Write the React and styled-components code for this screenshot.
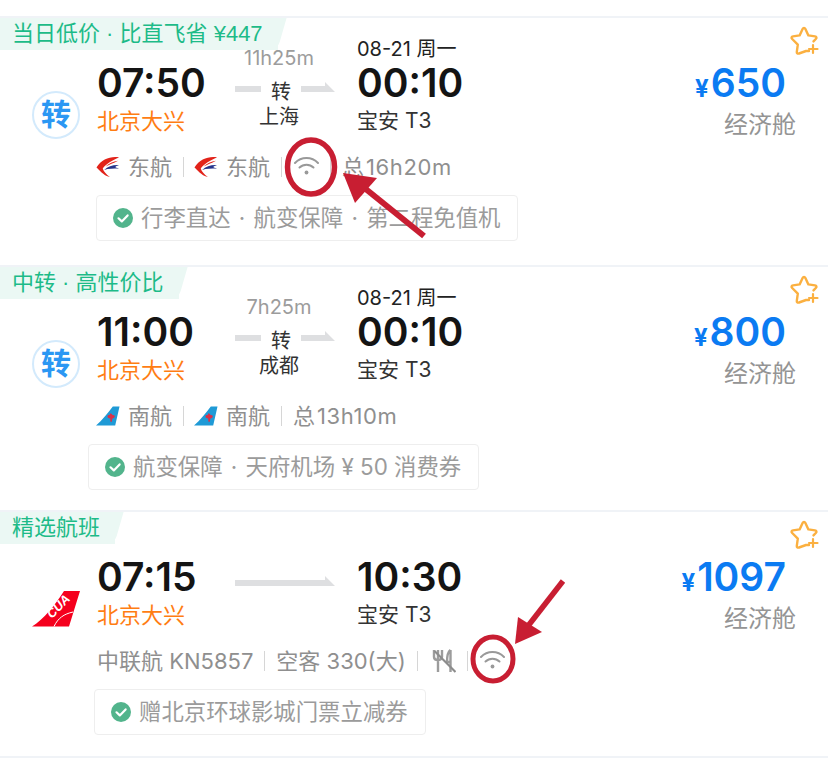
import React from 'react';
import styled, {createGlobalStyle} from 'styled-components';

const GlobalStyle = createGlobalStyle`
  html, body {
    margin: 0;
    padding: 0;
    background: #fff;
    font-family: Inter, "Noto Sans CJK SC", sans-serif;
  }
`
const Page = styled.div`
  position: relative;
  width: 828px;
  height: 762px;
  padding-top: 16px;
  box-sizing: border-box;
  overflow: hidden;
`
const Card = styled.section`
  position: relative;
  height: ${p => p.$height}px;
  box-sizing: border-box;
  border-top: 2px solid #f0f3f7;
  padding-top: 20px;
  &:last-of-type {
    border-bottom: 2px solid #f0f3f7;
  }
`
const Tag = styled.div`
  position: absolute;
  top: 0;
  left: 0;
  z-index: 0;
  height: 32px;
  padding: 0 15px 0 12px;
  background: #ebf8f4;
  color: #1dbb88;
  font-family: "Liberation Sans", "Noto Sans CJK SC", sans-serif;
  font-size: 22px;
  line-height: 31px;
  white-space: pre;
  &::after {
    content: '';
    position: absolute;
    top: 0;
    bottom: 0;
    right: -4px;
    width: 12px;
    background: #ebf8f4;
    transform: skewX(-16deg);
    border-bottom-right-radius: 8px;
    z-index: -1;
  }
`
const Star = styled.svg`
  position: absolute;
  top: 8px;
  right: 9px;
  width: 30px;
  height: 30px;
`
const FlightRow = styled.div`
  display: grid;
  grid-template-columns: 97px 138px 122px 1fr 132px;
  grid-template-rows: 98px;
`
const LogoSlot = styled.div`
  align-self: end;
  height: 47px;
  padding-left: 32px;
  margin-bottom: -2px;
  display: flex;
  align-items: center;
`
const TransferBadge = styled.div`
  width: 48px;
  height: 48px;
  box-sizing: border-box;
  border: 2px solid #d3eafc;
  border-radius: 50%;
  color: #2b97f3;
  font-size: 30px;
  font-weight: 700;
  line-height: 42px;
  text-align: center;
`
const Stop = styled.div`
  display: flex;
  flex-direction: column;
  justify-content: flex-end;
`
const DateText = styled.div`
  height: 22px;
  font-size: 20px;
  line-height: 22px;
  color: #222;
  white-space: pre;
`
const Time = styled.div`
  height: 46px;
  font-size: 39px;
  font-weight: 600;
  line-height: 46px;
  color: #141414;
`
const Place = styled.div`
  height: 30px;
  font-size: ${p => p.$orange ? 22 : 21}px;
  line-height: 30px;
  white-space: pre;
  color: ${p => p.$orange ? '#ff7d13' : '#333'};
`
const Middle = styled.div`
  width: 100px;
  padding-top: 9px;
`
const Duration = styled.div`
  width: 88px;
  height: 22px;
  font-size: 20px;
  line-height: 22px;
  text-align: center;
  color: #9c9c9c;
`
const ArrowRow = styled.div`
  display: flex;
  align-items: center;
  height: 24px;
  margin-top: 9px;
  font-size: 20px;
  color: #333;
`
const Bar = styled.div`
  width: 26px;
  height: 6px;
  margin-top: -2px;
  background: #dedfe1;
`
const ArrowBar = styled.div`
  flex: 1;
  height: 10px;
  margin-top: -6px;
  background: #dedfe1;
  clip-path: polygon(0 4px, calc(100% - 10px) 4px, calc(100% - 10px) 0, 100% 100%, 0 100%);
`
const Via = styled.div`
  width: 40px;
  text-align: center;
`
const ViaCity = styled.div`
  width: 88px;
  margin-top: 3px;
  font-size: 20px;
  line-height: 24px;
  text-align: center;
  color: #333;
`
const PriceCol = styled.div`
  grid-column: 5;
  display: flex;
  flex-direction: column;
  align-items: flex-end;
  padding: 22px 32px 0 0;
`
const Price = styled.div`
  margin-right: 10px;
  height: 46px;
  line-height: 46px;
  color: #0b7bf2;
  white-space: nowrap;
  font-weight: 600;
  font-size: 39px;
  & > span {
    font-size: 24px;
    font-weight: 700;
    margin-right: 2px;
  }
`
const CabinClass = styled.div`
  margin-top: 3px;
  font-size: 24px;
  line-height: 32px;
  color: #949494;
`
const InfoRow = styled.div`
  display: flex;
  align-items: center;
  height: 30px;
  margin: 14px 0 0 97px;
  font-size: 22px;
  color: #8f8f8f;
  white-space: pre;
`
const Sep = styled.i`
  width: 1px;
  height: 20px;
  margin: 4px 11px 0;
  background: #d6d6d6;
`
const CarrierLogo = styled.svg`
  width: 24px;
  height: 22px;
  margin: 4px 8px 0 -1px;
  flex: none;
`
const SmallIcon = styled.svg`
  width: ${p => p.$width}px;
  height: 24px;
  margin-top: 4px;
  flex: none;
`
const Total = styled.span`
  & > b {
    font-weight: 400;
    margin-left: 2px;
    letter-spacing: .6px;
  }
`
const Perks = styled.div`
  display: inline-flex;
  align-items: center;
  height: 46px;
  box-sizing: border-box;
  margin: 15px 0 0 ${p => p.$left}px;
  padding: 0 17px 0 16px;
  border: 1px solid #eeeeee;
  border-radius: 4px;
  font-size: 22.4px;
  line-height: 42px;
  color: #9b9b9b;
  white-space: pre;
`
const CheckIcon = styled.svg`
  width: 20px;
  height: 20px;
  margin-right: 8px;
  flex: none;
`
const Dot = styled.span`
  display: inline-block;
  width: 23px;
  text-align: center;
`
const Overlay = styled.svg`
  position: absolute;
  top: 0;
  left: 0;
  width: 828px;
  height: 762px;
  pointer-events: none;
`

const StarIcon = () => (
  <Star viewBox="0 0 30 30" fill="none" stroke="#fbb040" strokeWidth="2.4" strokeLinecap="round" strokeLinejoin="round">
    <path d="M20 25 H17 L10 27.5 C8.5 28 7.6 27.2 7.8 25.8 L8.8 18.6 L3.2 13 C2 11.8 2.5 10.6 4 10.4 L10.6 9.4 L13.6 3 C14.3 1.6 15.7 1.6 16.4 3 L19.4 9.4 L26 10.4 C27.5 10.6 28 11.8 26.8 13 L24.5 15.4"/>
    <path d="M24 19 V27 M20 23 H28.5" strokeWidth="2.2"/>
  </Star>
)

const EasternLogo = () => (
  <CarrierLogo viewBox="0 0 25 22">
    <path fill="#e2231a" d="M24 1 C15 -.5 6 3 .5 11.5 C3.5 14 7 19.5 14.5 21.5 C10.5 18.5 8 15.5 7 12.5 C10.5 7.5 17 4 24 1 Z"/>
    <path fill="#27348b" d="M24 9 C18 8.5 12.5 10.5 8.5 14 C13 12.5 18 12.5 24 12.5 C20 11.6 18 11 24 9 Z"/>
    <path fill="#e2231a" d="M23 4.5 C18 5 13 7.5 10 10.5 C14 8.5 18 7 23 4.5 Z"/>
  </CarrierLogo>
)

const SouthernLogo = () => (
  <CarrierLogo viewBox="0 0 25 22">
    <path fill="#1f9ad6" d="M0 21 C6 16 12 8 17.5 1 H24.5 L20 21 Z"/>
    <path fill="#d8314a" d="M14.5 8.5 C16 8 17 9 17 10 C18.5 9.5 20 10.5 19.5 12 C18.5 13.5 17.5 13.5 17 13.5 L16.5 17 H15 L14.8 13.5 C13.5 13.5 12 13 12 11.5 C12 10 13.5 9.8 14.5 10 Z"/>
  </CarrierLogo>
)

const CuaLogo = () => (
  <svg width="48" height="36" viewBox="0 0 48 36">
    <path fill="#f5001d" d="M0 35.5 C12 28 23 14 32 0 H48 L37 35.5 Z"/>
    <path fill="none" stroke="#fff" strokeWidth="1" d="M22 35.5 C26 27 32 23 41 21"/>
    <text x="0" y="0" transform="translate(20 28) rotate(-46)" fill="#fff" fontFamily="Liberation Sans" fontStyle="italic" fontWeight="700" fontSize="12.5">CUA</text>
  </svg>
)

const WifiIcon = () => (
  <SmallIcon $width={26} viewBox="0 0 26 24" fill="none" stroke="#999" strokeWidth="2" strokeLinecap="round">
    <path d="M2 8 A16 16 0 0 1 25 8"/>
    <path d="M6.5 12.5 A10 10 0 0 1 20.5 12.5"/>
    <circle cx="13.5" cy="17.5" r="1.9" fill="#999" stroke="none"/>
  </SmallIcon>
)

const NoMealIcon = () => (
  <SmallIcon $width={27} viewBox="0 0 27 24" fill="none" stroke="#9c9c9c" strokeWidth="2.4">
    <path d="M5 1 V8 C5 10.5 7.5 11 9 11 C10.5 11 13 10.5 13 8 V1 M9 1 V23"/>
    <path d="M21.5 1 C18.5 3 18 8 18 13 H21.5 V23 M21.5 1 V13" strokeLinejoin="round"/>
    <path d="M5.5 2 L26.5 23" stroke="#8c8c8c" strokeWidth="2.2"/>
  </SmallIcon>
)

const Check = () => (
  <CheckIcon viewBox="0 0 20 20">
    <circle cx="10" cy="10" r="10" fill="#52b48c"/>
    <path d="M5.5 10.3 L8.8 13.4 L14.6 7.4" fill="none" stroke="#fff" strokeWidth="2.2" strokeLinecap="round" strokeLinejoin="round"/>
  </CheckIcon>
)

const RouteLine = ({via}) => (
  <ArrowRow>
    {via && <Bar />}
    {via && <Via>转</Via>}
    <ArrowBar />
  </ArrowRow>
)

const Flight = ({height, tag, logo, depart, arrive, duration, via, price, info, perksLeft, perks}) => (
  <Card $height={height}>
    <Tag>{tag}</Tag>
    <StarIcon />
    <FlightRow>
      <LogoSlot>{logo}</LogoSlot>
      <Stop>
        <Time>{depart}</Time>
        <Place $orange>北京大兴</Place>
      </Stop>
      <Middle>
        <Duration>{duration}</Duration>
        <RouteLine via={via} />
        {via && <ViaCity>{via}</ViaCity>}
      </Middle>
      <Stop>
        {via && <DateText>08-21 周一</DateText>}
        <Time>{arrive}</Time>
        <Place>宝安 T3</Place>
      </Stop>
      <PriceCol>
        <Price><span>¥</span>{price}</Price>
        <CabinClass>经济舱</CabinClass>
      </PriceCol>
    </FlightRow>
    <InfoRow>{info}</InfoRow>
    <Perks $left={perksLeft}>
      <Check />
      {perks.map((p, i) => (
        <React.Fragment key={p}>
          {i > 0 && <Dot>·</Dot>}
          {p}
        </React.Fragment>
      ))}
    </Perks>
  </Card>
)

const App = () => (
  <Page>
    <GlobalStyle />
    <Flight
      height={249}
      tag="当日低价 · 比直飞省 ¥447"
      logo={<TransferBadge>转</TransferBadge>}
      depart="07:50"
      arrive="00:10"
      duration="11h25m"
      via="上海"
      price="650"
      perksLeft={96}
      perks={['行李直达', '航变保障', '第二程免值机']}
      info={<>
        <EasternLogo />东航<Sep />
        <EasternLogo />东航<Sep />
        <WifiIcon /><Sep />
        <Total>总<b>16h20m</b></Total>
      </>}
    />
    <Flight
      height={245}
      tag="中转 · 高性价比"
      logo={<TransferBadge>转</TransferBadge>}
      depart="11:00"
      arrive="00:10"
      duration="7h25m"
      via="成都"
      price="800"
      perksLeft={88}
      perks={['航变保障', '天府机场 ¥ 50 消费券']}
      info={<>
        <SouthernLogo />南航<Sep />
        <SouthernLogo />南航<Sep />
        <Total>总<b>13h10m</b></Total>
      </>}
    />
    <Flight
      height={248}
      tag="精选航班"
      logo={<CuaLogo />}
      depart="07:15"
      arrive="10:30"
      price="1097"
      perksLeft={94}
      perks={['赠北京环球影城门票立减券']}
      info={<>
        中联航 KN5857<Sep />
        空客 330(大)<Sep />
        <NoMealIcon /><Sep />
        <WifiIcon />
      </>}
    />
    <Overlay viewBox="0 0 828 762">
      <ellipse cx="311" cy="167" rx="23.5" ry="27" fill="none" stroke="#c81e32" strokeWidth="5.5"/>
      <path d="M424 236 L362 186" stroke="#c81e32" strokeWidth="6"/>
      <path d="M343 173 L377 178 L355 203 Z" fill="#c81e32"/>
      <ellipse cx="493" cy="659" rx="20" ry="22" fill="none" stroke="#c81e32" strokeWidth="5"/>
      <path d="M563 581 L528 626" stroke="#c81e32" strokeWidth="5.5"/>
      <path d="M515 644 L518 617 L542 632 Z" fill="#c81e32"/>
    </Overlay>
  </Page>
)

export default App;
